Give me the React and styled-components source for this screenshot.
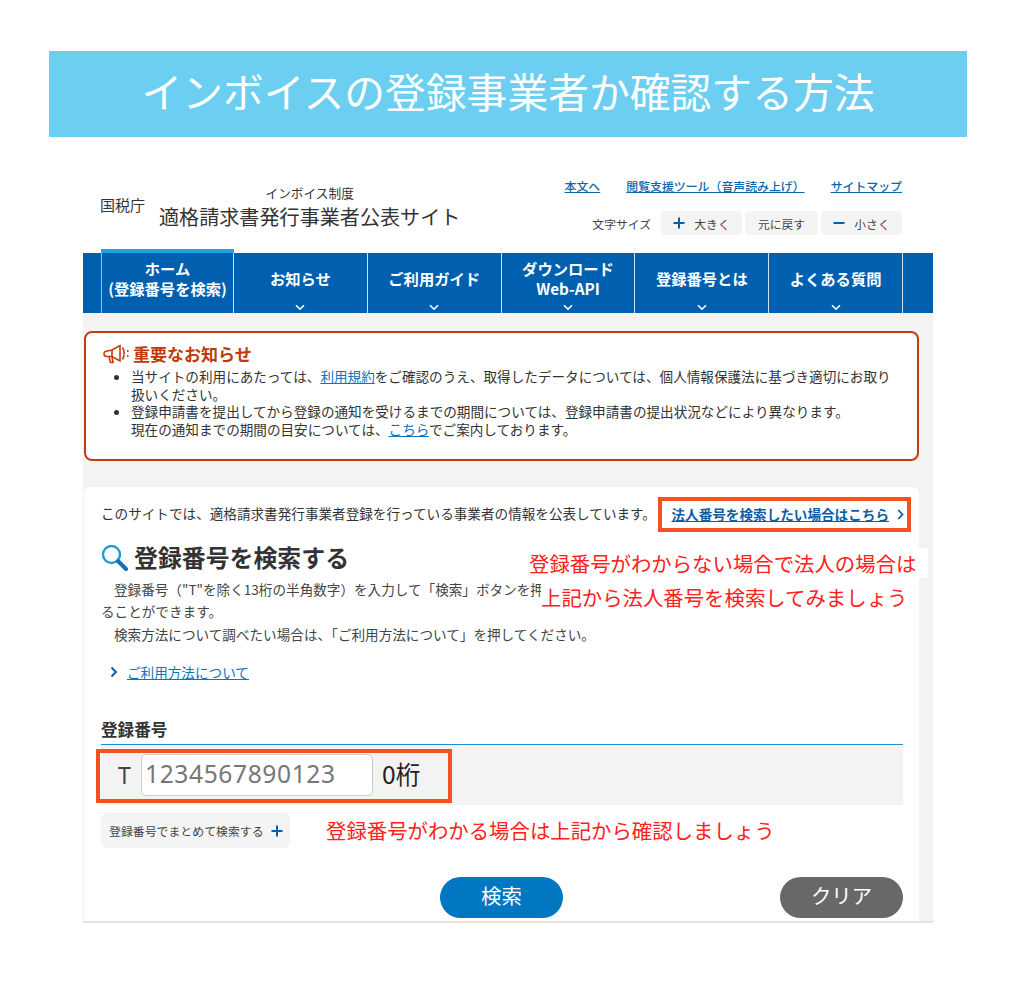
import React from "react";
import styled, { createGlobalStyle } from "styled-components";

const Global = createGlobalStyle`
  html, body { margin: 0; padding: 0; background: #fff; }
  body { font-family: "Noto Sans CJK JP", "Noto Sans", sans-serif; color: #333; }
  * { box-sizing: border-box; }
`;
const Page = styled.div`
  width: 1024px; height: 1001px; padding-top: 51px; overflow: hidden;
`;
const Banner = styled.h1`
  margin: 0 0 28px 49px; width: 918px; height: 86px; background: #6ccef0; color: #fff;
  font-weight: 400; font-size: 40.8px; line-height: 80px; text-align: center;
`;
const Shot = styled.div`
  position: relative; margin-left: 83px; width: 850px; height: 758px; background: #f3f3f3;
  border-bottom: 2px solid #e8e2d8;
`;
const Header = styled.header`
  height: 88px; background: #fff; position: relative; padding: 0 31px 0 17px;
  display: flex; justify-content: space-between;
`;
const Brand = styled.div`display: flex; align-items: flex-start; padding-top: 20px;`;
const Agency = styled.div`font-size: 15px; line-height: 20px; margin-top: 10px; color: #333; width: 59px; white-space: nowrap;`;
const Titles = styled.div`display: flex; flex-direction: column; align-items: center;`;
const SubTitle = styled.div`font-size: 12.7px; line-height: 16px; color: #333;`;
const SiteTitle = styled.div`font-size: 20.1px; line-height: 28px; color: #333; margin-top: 2px;`;
const Tools = styled.div`display: flex; flex-direction: column; align-items: flex-end; padding-top: 12px;`;
const TopLinks = styled.div`display: flex; gap: 26px; font-size: 11.9px; font-weight: 500; line-height: 18px;`;
const TopLink = styled.a`color: #0d68ab; text-decoration: underline; white-space: nowrap;`;
const SizeRow = styled.div`display: flex; align-items: center; gap: 3px; margin-top: 16px; font-size: 11.8px; color: #444;`;
const SizeLabel = styled.span`margin-right: 7px;`;
const SizeBtn = styled.span`
  width: ${p => p.$w}px; height: 24px; background: #f4f4f4; border-radius: 4px; display: flex;
  align-items: center; justify-content: center; gap: 9px; font-size: 11.8px; color: #444;
`;
const Nav = styled.nav`
  height: 60px; background: #0060b0; padding-left: 18px; display: flex;
`;
const NavItem = styled.div`
  position: relative; width: ${p => p.$first ? 133 : 133.8}px; border-right: 1px solid #cfe2f3;
  ${p => p.$first ? "border-left: 1px solid #8fc0e8;" : ""}
  color: #fff; font-size: 15.3px; font-weight: 700; line-height: 20px; text-align: center; white-space: nowrap;
  padding-top: ${p => p.$two ? "5px" : "15px"};
  ${p => p.$active ? `&::before { content: ""; position: absolute; left: -1px; right: -1px; top: -4px; height: 4px; background: #1ea5dd; }` : ""}
`;
const Chevron = styled.svg`
  position: absolute; left: 50%; margin-left: -5px; bottom: 2px; width: 10px; height: 7px;
`;
const Main = styled.div`padding: 18px 14px 0 1px;`;
const Notice = styled.section`
  height: 130px; border: 2px solid #c53d0c; border-radius: 8px; background: #fff; padding: 10px 17px;
`;
const NoticeHead = styled.div`
  display: flex; align-items: center; gap: 2px; color: #bf3a08; font-size: 17px; font-weight: 700; line-height: 22px;
  margin-bottom: 3px;
`;
const NoticeList = styled.ul`margin: 0; padding-left: 28px; font-size: 13.6px; line-height: 17.7px; color: #333;`;
const Link = styled.a`color: #0d74bc; text-decoration: underline;`;
const Card = styled.section`
  margin-top: 26px; height: 434px; background: #fff; border-radius: 6px 6px 0 0; padding: 15px 16px 0 17px;
`;
const Lead = styled.p`margin: 0; font-size: 13.6px; line-height: 22px; color: #333; white-space: nowrap;`;
const Heading = styled.h2`
  margin: 18px 0 0; display: flex; align-items: center; gap: 5px; font-size: 23.9px; font-weight: 700; line-height: 30px; color: #333;
`;
const Body = styled.div`
  margin-top: 5.5px; font-size: 13.6px; line-height: 22.5px; color: #444;
`;
const Indent = styled.div`text-indent: 13px; white-space: nowrap;`;
const Wrapped = styled.div`white-space: nowrap;`;
const HowTo = styled.div`
  display: flex; align-items: center; gap: 9px; margin: 17px 0 0 9px; font-size: 13.6px; line-height: 20px;
`;
const FieldLabel = styled.div`
  margin-top: 35px; font-size: 16.6px; font-weight: 700; line-height: 24px; color: #333; padding-bottom: 3px; border-bottom: 1px solid #1b8ed3;
`;
const FieldRow = styled.div`
  height: 60px; background: #f3f3f3; display: flex; align-items: center; padding-left: 17px;
`;
const Prefix = styled.span`font-family: "Noto Sans", sans-serif; font-size: 23px; color: #444; width: 23px;`;
const NumberInput = styled.div`
  width: 232px; height: 42px; background: #fff; border: 1px solid #ccc; border-radius: 5px; padding-left: 3px;
  font-family: "Noto Sans", sans-serif; font-size: 24.6px; line-height: 38px; color: #777; letter-spacing: 0.6px;
`;
const Digits = styled.span`margin-left: 9px; font-size: 24.6px; line-height: 1; color: #222; margin-top: -3px;`;
const BulkBtn = styled.div`
  margin-top: 8px; width: 189px; height: 35px; background: #f4f4f4; border-radius: 6px; display: flex; align-items: center;
  padding-left: 8px; gap: 7px; font-size: 11.9px; color: #444; white-space: nowrap;
`;
const Actions = styled.div`height: 41px; margin-top: 29px; display: flex; padding-left: 339px;`;
const Pill = styled.div`
  width: 123px; height: 41px; border-radius: 21px; background: ${p => p.$bg}; color: #fff; font-size: 20.4px; text-align: center; line-height: 36px;
  ${p => p.$push ? "margin-left: auto;" : ""}
`;
const Callout = styled.div`
  position: absolute; left: ${p => p.$l}px; top: ${p => p.$t}px; border: 4px solid #f4511e; width: ${p => p.$w}px; height: ${p => p.$h}px;
`;
const RightLink = styled.a`
  position: absolute; left: 588.5px; top: 340px; font-size: 13.6px; font-weight: 700; line-height: 18px; color: #0d5ea6;
  display: flex; align-items: center; gap: 8px; white-space: nowrap;
`;
const Underlined = styled.span`text-decoration: underline;`;
const Note = styled.div`
  position: absolute; left: ${p => p.$l}px; top: ${p => p.$t}px; color: #ff2020; font-size: 20.4px; line-height: 30px;
  white-space: nowrap; background: ${p => p.$bg ? "#fff" : "transparent"}; padding-right: ${p => p.$pr || 0}px;
`;

const Chev = () => (
  <Chevron viewBox="0 0 10 7"><path d="M1 1.2 5 5.2 9 1.2" fill="none" stroke="#fff" strokeWidth="1.6" /></Chevron>
);
const Plus = () => (
  <svg width="12" height="12" viewBox="0 0 12 12"><path d="M6 .5v11M.5 6h11" fill="none" stroke="#0060b0" strokeWidth="2" /></svg>
);
const Minus = () => (
  <svg width="12" height="12" viewBox="0 0 12 12"><path d="M.5 6h11" fill="none" stroke="#0060b0" strokeWidth="2" /></svg>
);
const nav = [
  { t: ["ホーム", "(登録番号を検索)"], active: true, first: true },
  { t: ["お知らせ"], chev: true },
  { t: ["ご利用ガイド"], chev: true },
  { t: ["ダウンロード", "Web-API"], chev: true },
  { t: ["登録番号とは"], chev: true },
  { t: ["よくある質問"], chev: true },
];

export default function App() {
  return (
    <Page>
      <Global />
      <Banner>インボイスの登録事業者か確認する方法</Banner>
      <Shot>
        <Header>
          <Brand>
            <Agency>国税庁</Agency>
            <Titles>
              <SubTitle>インボイス制度</SubTitle>
              <SiteTitle>適格請求書発行事業者公表サイト</SiteTitle>
            </Titles>
          </Brand>
          <Tools>
            <TopLinks>
              <TopLink>本文へ</TopLink>
              <TopLink>閲覧支援ツール（音声読み上げ）</TopLink>
              <TopLink>サイトマップ</TopLink>
            </TopLinks>
            <SizeRow>
              <SizeLabel>文字サイズ</SizeLabel>
              <SizeBtn $w={81}><Plus />大きく</SizeBtn>
              <SizeBtn $w={73}>元に戻す</SizeBtn>
              <SizeBtn $w={81}><Minus />小さく</SizeBtn>
            </SizeRow>
          </Tools>
        </Header>
        <Nav>
          {nav.map((n) => (
            <NavItem key={n.t[0]} $active={n.active} $first={n.first} $two={n.t.length > 1}>
              {n.t.map((l) => <div key={l}>{l}</div>)}
              {n.chev && <Chev />}
            </NavItem>
          ))}
        </Nav>
        <Main>
          <Notice>
            <NoticeHead>
              <svg width="28" height="20" viewBox="0 0 28 20" fill="none" stroke="#c53d0c" strokeWidth="1.6">
                <path d="M2 7.5 L9 6 L17 1.5 V17 L9 12.5 H4 C2 12.5 1 11 1 10 C1 8.5 1.5 8 2 7.5Z" />
                <path d="M9 6V12.5M6 13l1.5 5.5h2.5L9 13" />
                <path d="M19.5 3.5C21.5 7 21.5 12 19.5 15.5" />
                <path d="M24 7h1.5M24 12h1.5" strokeWidth="2" />
              </svg>
              重要なお知らせ
            </NoticeHead>
            <NoticeList>
              <li>当サイトの利用にあたっては、<Link>利用規約</Link>をご確認のうえ、取得したデータについては、個人情報保護法に基づき適切にお取り扱いください。</li>
              <li>登録申請書を提出してから登録の通知を受けるまでの期間については、登録申請書の提出状況などにより異なります。<br />現在の通知までの期間の目安については、<Link>こちら</Link>でご案内しております。</li>
            </NoticeList>
          </Notice>
          <Card>
            <Lead>このサイトでは、適格請求書発行事業者登録を行っている事業者の情報を公表しています。</Lead>
            <Heading>
              <svg width="28" height="27" viewBox="0 0 28 27" fill="none">
                <circle cx="10.5" cy="10.5" r="8.5" stroke="#1b9ad6" strokeWidth="2.4" />
                <path d="M17 17l8 8" stroke="#1b6fb0" strokeWidth="4" strokeLinecap="round" />
              </svg>
              登録番号を検索する
            </Heading>
            <Body>
              <Indent>登録番号（"T"を除く13桁の半角数字）を入力して「検索」ボタンを押</Indent>
              <Wrapped>ることができます。</Wrapped>
              <Indent>検索方法について調べたい場合は、「ご利用方法について」を押してください。</Indent>
            </Body>
            <HowTo>
              <svg width="8" height="12" viewBox="0 0 8 12"><path d="M1.5 1.5 6 6l-4.5 4.5" fill="none" stroke="#0d5ea6" strokeWidth="2" /></svg>
              <Link>ご利用方法について</Link>
            </HowTo>
            <FieldLabel>登録番号</FieldLabel>
            <FieldRow>
              <Prefix>T</Prefix>
              <NumberInput>1234567890123</NumberInput>
              <Digits>0桁</Digits>
            </FieldRow>
            <BulkBtn>登録番号でまとめて検索する<Plus /></BulkBtn>
            <Actions>
              <Pill $bg="#0077c0">検索</Pill>
              <Pill $bg="#686868" $push>クリア</Pill>
            </Actions>
          </Card>
        </Main>
        <RightLink><Underlined>法人番号を検索したい場合はこちら</Underlined>
          <svg width="7" height="11" viewBox="0 0 7 11"><path d="M1.2 1 5.5 5.5 1.2 10" fill="none" stroke="#0d5ea6" strokeWidth="1.8" /></svg>
        </RightLink>
        <Callout $l={575} $t={332} $w={253} $h={35} />
        <Callout $l={13} $t={584} $w={356} $h={54} />
        <Note $l={446} $t={383} $bg $pr={12}>登録番号がわからない場合で法人の場合は</Note>
        <Note $l={458} $t={417} $bg>上記から法人番号を検索してみましょう</Note>
        <Note $l={243} $t={650}>登録番号がわかる場合は上記から確認しましょう</Note>
      </Shot>
    </Page>
  );
}
